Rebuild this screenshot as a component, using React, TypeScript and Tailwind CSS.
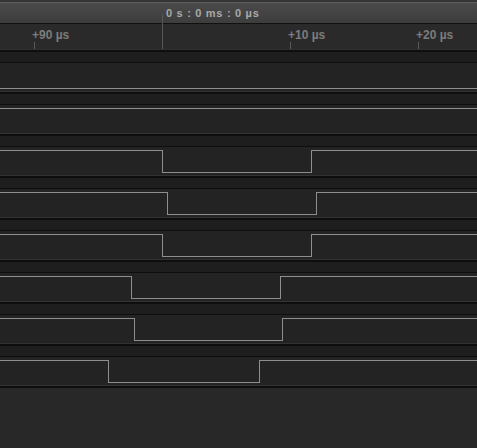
import React from 'react'

// low windows per channel, null = flat line
const channels: { level: 'high' | 'low'; low?: [number, number] }[] = [
    { level: 'low' },
    { level: 'high' },
    { level: 'high', low: [162, 311] },
    { level: 'high', low: [167, 316] },
    { level: 'high', low: [162, 311] },
    { level: 'high', low: [131, 280] },
    { level: 'high', low: [134, 282] },
    { level: 'high', low: [108, 259] },
]

const ticks = [
    { x: 34, label: '+90 µs' },
    { x: 290, label: '+10 µs' },
    { x: 418, label: '+20 µs' },
]

const Wave = ({ level, low }: { level: 'high' | 'low'; low?: [number, number] }) => {
    const hi = 3.5
    const lo = 25.5
    let points = ''
    if (!low) {
        const y = level === 'high' ? hi : lo
        points = `0,${y} 477,${y}`
    } else {
        const a = low[0] + 0.5
        const b = low[1] + 0.5
        points = `0,${hi} ${a},${hi} ${a},${lo} ${b},${lo} ${b},${hi} 477,${hi}`
    }
    return (
        <svg width="477" height="28" className="block">
            <polyline points={points} fill="none" stroke="#8e8e8e" strokeWidth="1" shapeRendering="crispEdges" />
        </svg>
    )
}

const App: React.FC = () => {
    return (
        <div className="w-[477px] h-[448px] overflow-hidden bg-[#282828] flex flex-col relative" style={{ fontFamily: '"Liberation Sans", Arial, sans-serif' }}>
            {/* header */}
            <div className="h-[24px] shrink-0 border-b border-[#111] flex flex-col">
                <div className="h-[2px] bg-[#353535]"></div>
                <div className="h-[1px] bg-[#5e5e5e]"></div>
                <div className="flex-1 bg-gradient-to-b from-[#4a4a4a] to-[#3d3d3d] pl-[166px] leading-[18px]">
                    <span className="text-[11px] font-bold text-[#a9a9a9] tracking-[0.7px] whitespace-pre">0 s : 0 ms : 0 µs</span>
                </div>
            </div>

            {/* ruler */}
            <div className="h-[25px] shrink-0 bg-[#2a2a2a] relative">
                {ticks.map((t) => (
                    <div key={t.label} className="absolute top-0 h-full" style={{ left: t.x }}>
                        <span className="absolute left-[-2px] top-[4px] text-[12px] leading-[14px] font-bold text-[#7c7c7c] whitespace-nowrap">{t.label}</span>
                        <div className="absolute left-0 top-[18px] w-px h-[7px] bg-[#5a5a5a]"></div>
                    </div>
                ))}
            </div>

            <div className="absolute left-[162px] top-[14px] w-px h-[35px] bg-[#565656]"></div>

            {channels.map((c, i) => (
                <div key={i} className="shrink-0 flex flex-col">
                    <div className="h-[1px] bg-[#323232]"></div>
                    <div className="h-[2px] bg-[#0e0e0e]"></div>
                    <div className="h-[10px] bg-[#1e1e1e]"></div>
                    <div className="h-[1px] bg-[#0e0e0e]"></div>
                    <div className="h-[28px] bg-[#232323]">
                        <Wave level={c.level} low={c.low} />
                    </div>
                </div>
            ))}
            <div className="h-[1px] shrink-0 bg-[#323232]"></div>
            <div className="h-[2px] shrink-0 bg-[#0e0e0e]"></div>
        </div>
    )
}

export default App
